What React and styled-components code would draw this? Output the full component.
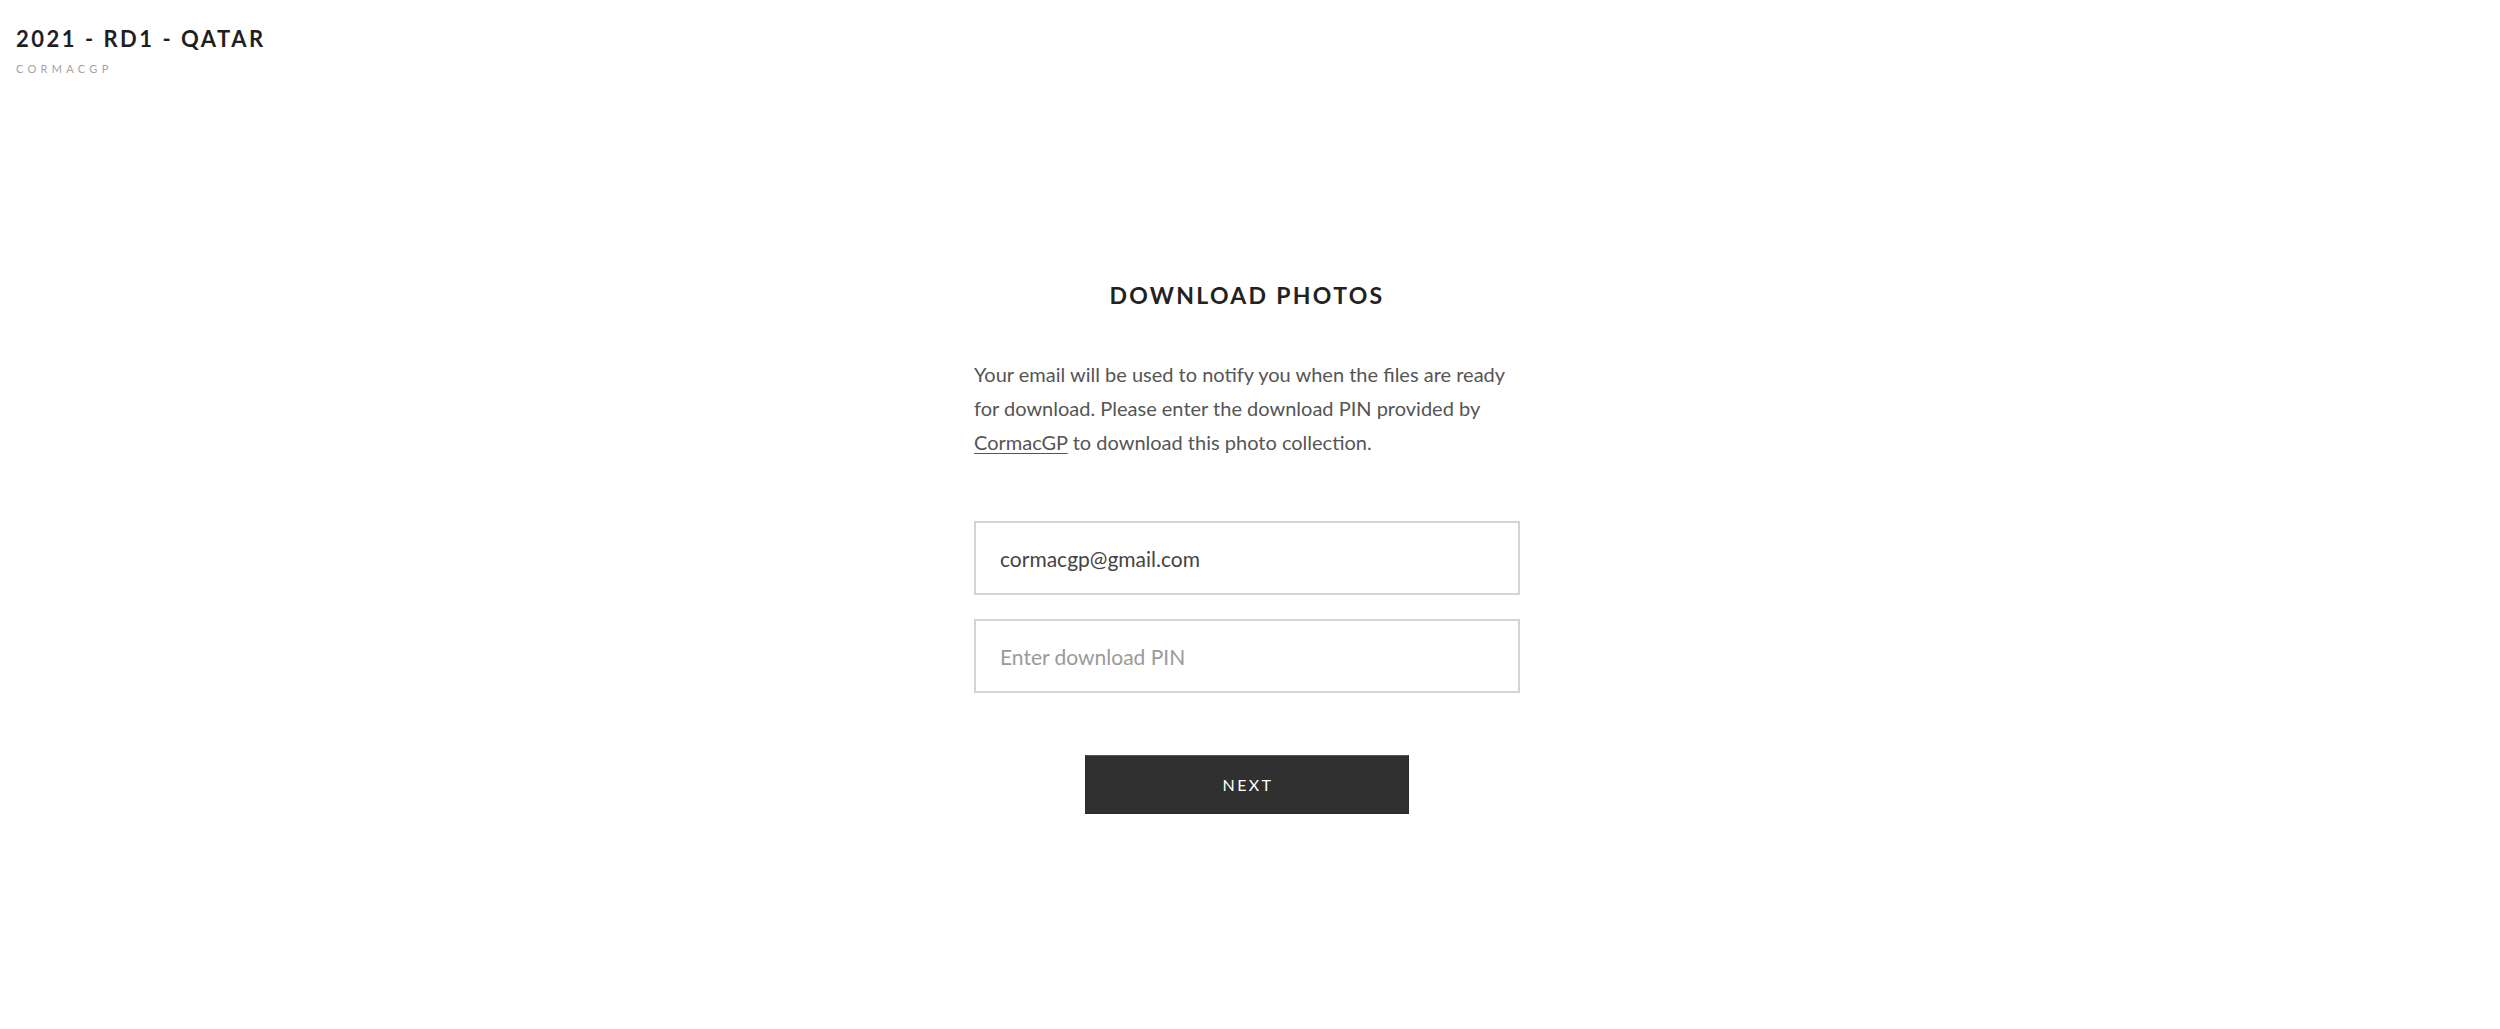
import React from "react";
import styled, { createGlobalStyle } from "styled-components";

const Global = createGlobalStyle`
  html, body { margin: 0; padding: 0; background: #ffffff; }
  body { font-family: "Lato", "Noto Sans", sans-serif; color: #222; }
  * { box-sizing: border-box; }
`;

const Page = styled.div`
  width: 100%;
  min-height: 1029px;
  display: flex;
  flex-direction: column;
`;

const Header = styled.header`
  padding: 26px 16px 0;
  display: flex;
  flex-direction: column;
  gap: 10px;
`;

const SiteTitle = styled.h1`
  margin: 0;
  font-family: "Lato", sans-serif;
  font-weight: 700;
  font-size: 22px;
  line-height: 1.2;
  letter-spacing: 2.5px;
  color: #1f1f1f;
`;

const SiteSub = styled.div`
  font-family: "Lato", sans-serif;
  font-size: 11px;
  line-height: 1.2;
  letter-spacing: 4.3px;
  color: #a3a3a3;
  text-transform: uppercase;
`;

const Main = styled.main`
  display: flex;
  justify-content: center;
  padding: 206px 6px 0 0;
`;

const Form = styled.form`
  width: 546px;
  display: flex;
  flex-direction: column;
  align-items: center;
`;

const Heading = styled.h2`
  margin: 0;
  font-family: "Lato", sans-serif;
  font-weight: 700;
  font-size: 23px;
  line-height: 1.2;
  letter-spacing: 2.3px;
  color: #222;
`;

const Intro = styled.p`
  margin: 48px 0 0;
  width: 100%;
  font-size: 20px;
  line-height: 34px;
  color: #555;
`;

const Link = styled.a`
  color: #555;
  text-decoration: underline;
  text-underline-offset: 3px;
  text-decoration-thickness: 1px;
`;

const Fields = styled.div`
  width: 100%;
  margin-top: 62px;
  display: flex;
  flex-direction: column;
  gap: 24px;
`;

const Input = styled.input`
  width: 100%;
  height: 74px;
  border: 2px solid #d4d4d4;
  padding: 0 24px;
  font-family: "Lato", sans-serif;
  font-size: 21px;
  color: #444;
  background: #fff;
  outline: none;
  &::placeholder { color: #9a9a9a; }
`;

const Button = styled.button`
  margin-top: 62px;
  width: 324px;
  height: 59px;
  background: #303030;
  border: 1px solid #2a2a2a;
  border-top-color: #555;
  color: #fff;
  font-family: "Lato", sans-serif;
  font-size: 16px;
  letter-spacing: 2.4px;
  padding: 0 0 0 2px;
  cursor: pointer;
`;

export default function App() {
  return (
    <Page>
      <Global />
      <Header>
        <SiteTitle>2021 - RD1 - QATAR</SiteTitle>
        <SiteSub>CormacGP</SiteSub>
      </Header>
      <Main>
        <Form onSubmit={(e) => e.preventDefault()}>
          <Heading>DOWNLOAD PHOTOS</Heading>
          <Intro>
            Your email will be used to notify you when the files are ready for download.
            Please enter the download PIN provided by <Link href="#">CormacGP</Link> to
            download this photo collection.
          </Intro>
          <Fields>
            <Input type="email" defaultValue="cormacgp@gmail.com" />
            <Input type="text" placeholder="Enter download PIN" />
          </Fields>
          <Button type="submit">NEXT</Button>
        </Form>
      </Main>
    </Page>
  );
}
